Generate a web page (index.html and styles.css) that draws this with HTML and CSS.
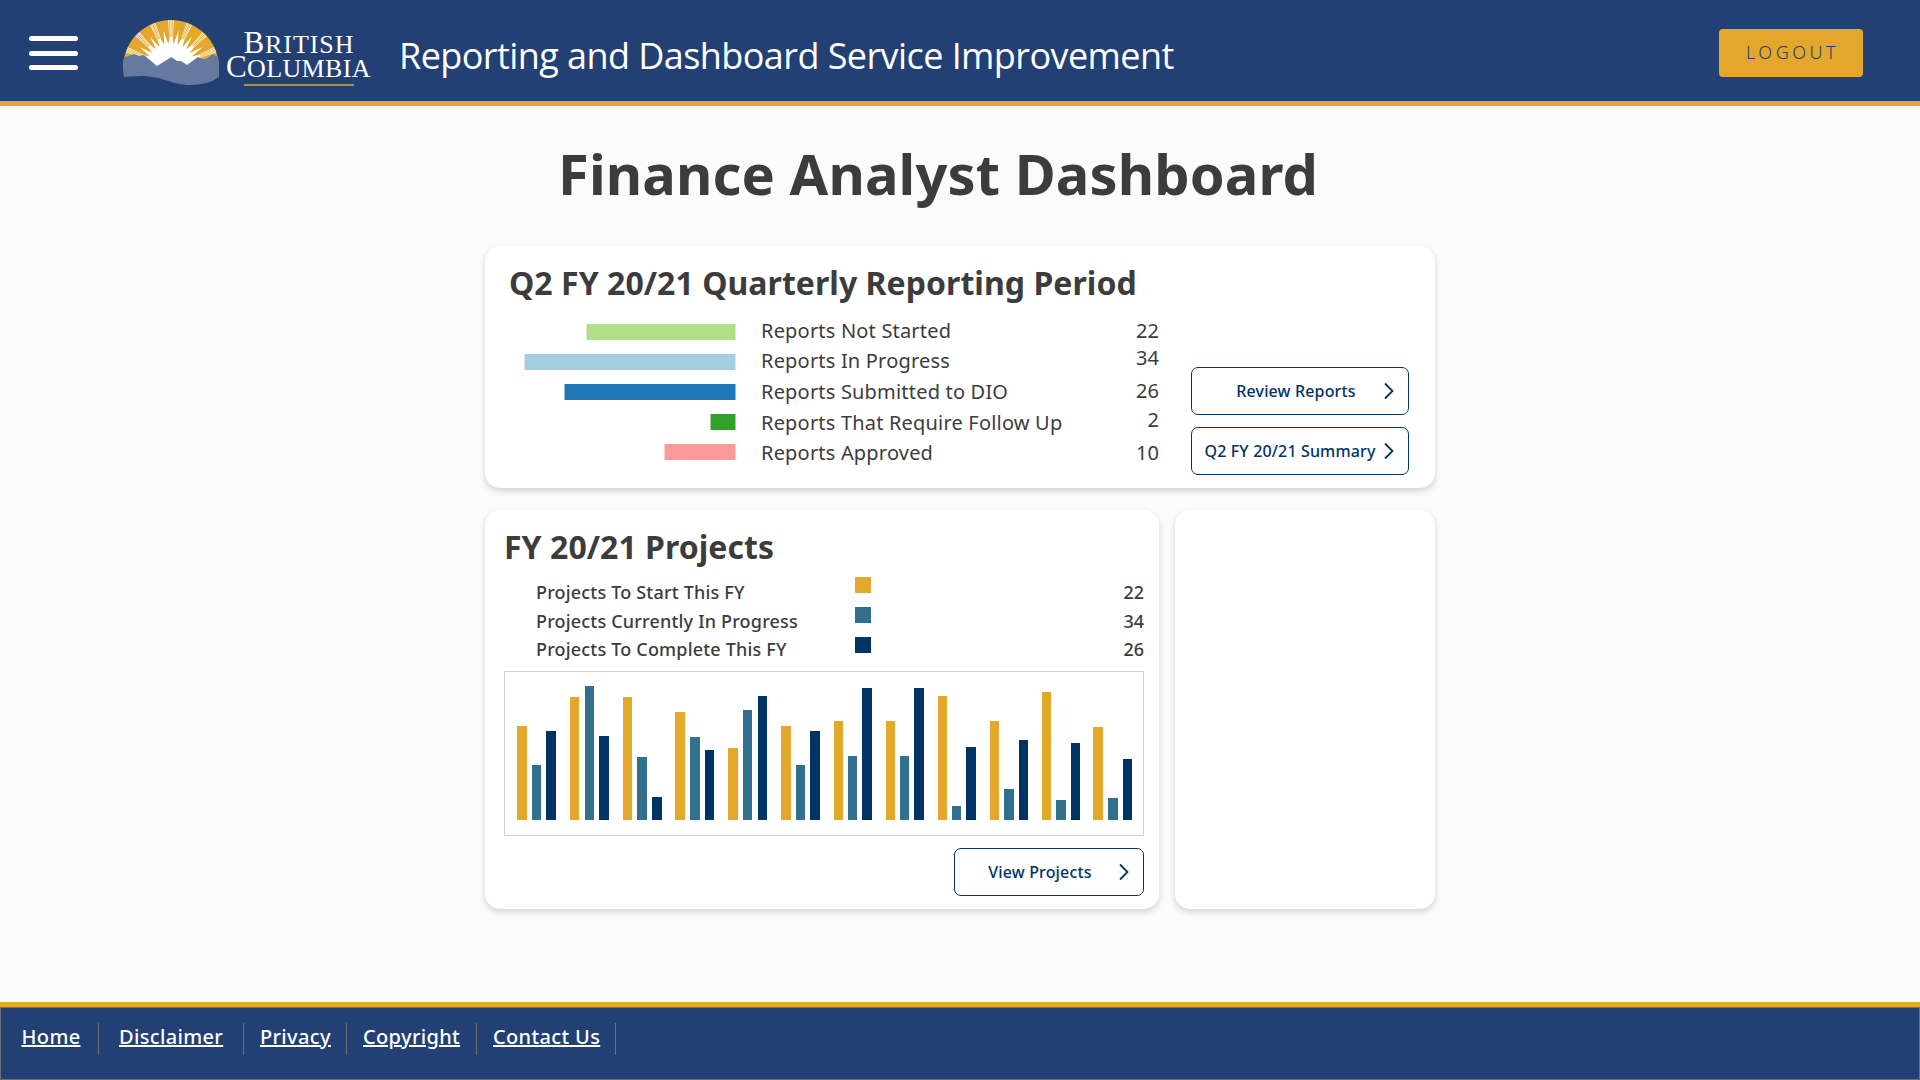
FILE: index.html
```html
<!DOCTYPE html>
<html lang="en">
<head>
<meta charset="utf-8">
<title>Finance Analyst Dashboard</title>
<link rel="stylesheet" href="styles.css">
</head>
<body>
<header class="header">
  <button class="menu" aria-label="Menu"><span></span><span></span><span></span></button>
  <svg class="logo" width="260" height="80" viewBox="115 12 260 80" role="img" aria-label="British Columbia">
    <defs>
      <clipPath id="dome"><path d="M123 68A48 48 0 0 1 219 68Z"/></clipPath>
      <g id="ray">
        <path d="M0 0L-2.900-50H-2.100ZM0 0L-1.250-50H-.5ZM0 0L.5-50H1.250ZM0 0L2.100-50H2.900ZM-2.800-22L-1.500-31H1.500L2.800-22Z"/>
        <path transform="rotate(11.250)" d="M-2.300-22L0-38 2.300-22Z"/>
      </g>
    </defs>
    <g clip-path="url(#dome)">
      <rect x="120" y="16" width="102" height="50" fill="#e3a82b"/>
      <g transform="translate(171 68)" fill="#fff">
        <circle r="24.500"/>
        <use href="#ray" transform="rotate(-90)"/>
        <use href="#ray" transform="rotate(-67.500)"/>
        <use href="#ray" transform="rotate(-45)"/>
        <use href="#ray" transform="rotate(-22.500)"/>
        <use href="#ray"/>
        <use href="#ray" transform="rotate(22.500)"/>
        <use href="#ray" transform="rotate(45)"/>
        <use href="#ray" transform="rotate(67.500)"/>
      </g>
    </g>
    <path d="M124 57.500L134 54 139 56 144 55 157 66 171.500 57 177 61 181 61 187 65 198 57 203 59 206 59 213 54 218 57Q219.500 67 219 77 208 85 190 85C172 85 162 76 141 76Q130 76 124 77.500 122 67 124 57.500Z" fill="#667a9f"/>
    <text class="word" x="243.500" y="53" textLength="110"><tspan class="cap">B</tspan>RITISH</text>
    <text class="word" x="226" y="77" textLength="144.500"><tspan class="cap">C</tspan>OLUMBIA</text>
    <rect x="244" y="84" width="110" height="2" fill="#b38c3b"/>
  </svg>
  <div class="app-name">Reporting and Dashboard Service Improvement</div>
  <button class="logout">LOGOUT</button>
</header>
<main class="main">
  <h1 class="title">Finance Analyst Dashboard</h1>
  <div class="board">
    <section class="card reports">
      <h2>Q2 FY 20/21 Quarterly Reporting Period</h2>
      <div class="reports-body">
        <div class="bars">
          <i class="bar not-started"></i><i class="bar in-progress"></i><i class="bar submitted"></i><i class="bar follow-up"></i><i class="bar approved"></i>
        </div>
        <ul class="labels"><li>Reports Not Started</li><li>Reports In Progress</li><li>Reports Submitted to DIO</li><li>Reports That Require Follow Up</li><li>Reports Approved</li></ul>
        <ul class="counts"><li>22</li><li>34</li><li>26</li><li>2</li><li>10</li></ul>
        <div class="actions">
          <button class="btn review"><span>Review Reports</span><svg width="10" height="18" viewBox="0 0 10 18"><path d="M1 1.500L8.500 9 1 16.500"/></svg></button>
          <button class="btn summary"><span>Q2 FY 20/21 Summary</span><svg width="10" height="18" viewBox="0 0 10 18"><path d="M1 1.500L8.500 9 1 16.500"/></svg></button>
        </div>
      </div>
    </section>
    <section class="card projects">
      <h2>FY 20/21 Projects</h2>
      <div class="legend">
        <ul class="legend-labels"><li>Projects To Start This FY</li><li>Projects Currently In Progress</li><li>Projects To Complete This FY</li></ul>
        <div class="swatches"><i class="gold"></i><i class="teal"></i><i class="navy"></i></div>
        <ul class="legend-counts"><li>22</li><li>34</li><li>26</li></ul>
      </div>
      <svg class="chart" width="638" height="163" viewBox="505 672 638 163" shape-rendering="crispEdges">
        <path class="gold" d="M517 820V726h10V820ZM570 820V697h9V820ZM623 820V697h9V820ZM675 820V712h10V820ZM728 820V748h10V820ZM781 820V726h10V820ZM834 820V721h9V820ZM886 820V721h9V820ZM938 820V696h9V820ZM990 820V721h9V820ZM1042 820V692h9V820ZM1093 820V727h10V820Z"/>
        <path class="teal" d="M532 820V765h9V820ZM585 820V686h9V820ZM637 820V757h10V820ZM690 820V737h10V820ZM743 820V710h9V820ZM796 820V765h9V820ZM848 820V756h9V820ZM900 820V756h9V820ZM952 820V806h9V820ZM1004 820V789h10V820ZM1056 820V800h10V820ZM1108 820V798h10V820Z"/>
        <path class="navy" d="M546 820V731h10V820ZM599 820V736h10V820ZM652 820V797h10V820ZM705 820V750h9V820ZM758 820V696h9V820ZM810 820V731h10V820ZM862 820V688h10V820ZM914 820V688h10V820ZM966 820V747h10V820ZM1019 820V740h9V820ZM1071 820V743h9V820ZM1123 820V759h9V820Z"/>
      </svg>
      <button class="btn view"><span>View Projects</span><svg width="10" height="18" viewBox="0 0 10 18"><path d="M1 1.500L8.500 9 1 16.500"/></svg></button>
    </section>
    <section class="card blank"></section>
  </div>
</main>
<footer class="footer">
  <nav><a class="home" href="#">Home</a><a class="disclaimer" href="#">Disclaimer</a><a class="privacy" href="#">Privacy</a><a class="copyright" href="#">Copyright</a><a class="contact" href="#">Contact Us</a></nav>
</footer>
</body>
</html>
```
FILE: styles.css
```css
* { box-sizing: border-box; }
body { margin: 0; height: 1080px; overflow: hidden; display: flex; flex-direction: column; background: #fbfbfb; color: #3c3c3c; font-family: "Noto Sans", sans-serif; }
ul { list-style: none; margin: 0; padding: 0; }
h1, h2 { margin: 0; font-weight: 700; }
button { font-family: inherit; padding: 0; cursor: pointer; }

.header { height: 106px; flex: none; display: flex; align-items: flex-start; background: #234075; border-bottom: 5px solid #e3a82b; }
.menu { width: 49px; margin: 36px 0 0 29px; border: 0; background: none; display: flex; flex-direction: column; gap: 9.500px; }
.menu span { height: 5px; border-radius: 3px; background: #fff; }
.logo { margin: 12px 0 0 37px; flex: none; }
.word { font-family: "Liberation Serif", serif; font-size: 26px; fill: #fff; }
.word .cap { font-size: 31px; }
.app-name { margin: 31px 0 0 24px; font-size: 36px; line-height: 50px; letter-spacing: -.57px; color: #fff; white-space: nowrap; font-family: "Open Sans", sans-serif; }
.logout { width: 144px; height: 48px; margin: 29px 57px 0 auto; padding: 0 0 2px 3px; border: 0; border-radius: 4px; background: #e3a82b; color: #234075; font-size: 18px; font-weight: 350; letter-spacing: 3.500px; }

.main { flex: 1; }
.title { margin: 29px 44px 0 0; font-size: 56px; line-height: 76px; letter-spacing: .1px; text-align: center; }
.board { width: 950px; margin: 35px auto 0; display: grid; grid-template-columns: 674px 260px; grid-template-rows: 242px 399px; gap: 22px 16px; }
.card { background: #fff; border-radius: 15px; box-shadow: 0 3px 6px rgba(0, 0, 0, .16); }
.card h2 { font-size: 32px; line-height: 44px; letter-spacing: .04px; white-space: nowrap; }

.reports { grid-column: 1 / 3; padding: 15px 26px 0 24px; }
.reports-body { display: grid; grid-template-columns: 227px 240px 183px 250px; padding-top: 9px; }
.reports-body .labels { padding-left: 25px; white-space: nowrap; letter-spacing: .19px; }
.bars { padding: 10px 0 0; display: flex; flex-direction: column; align-items: flex-end; gap: 14px; }
.bar { height: 16px; border: 0 solid rgba(255, 255, 255, .5); border-width: 0 1px; }
.not-started { width: 150px; background: #b2df8a; }
.in-progress { width: 212px; background: #a6cee3; }
.submitted { width: 172px; background: #1f78b4; }
.follow-up { width: 26px; background: #33a02c; }
.approved { width: 72px; background: #fb9a99; }
.labels, .counts { font-size: 20px; line-height: 30.500px; padding-top: 2px; }
.labels li:nth-child(2) { margin: -.6px 0 .6px; }
.counts { text-align: right; }
.counts li:nth-child(2) { margin: -3.500px 0 3.500px; }
.counts li:nth-child(3) { margin: -1px 0 1px; }
.counts li:nth-child(4) { margin: -3px 0 3px; }
.actions { margin: 53px 0 0 32px; width: 218px; display: flex; flex-direction: column; gap: 12px; }
.btn { width: 218px; height: 48px; display: flex; align-items: center; border: 1px solid #003366; border-radius: 7px; background: #fff; color: #003366; font-size: 16px; font-weight: 550; letter-spacing: .15px; padding: 0 14px 0 12px; white-space: nowrap; }
.btn span { flex: 1; text-align: center; }
.btn.review { padding-left: 16px; }
.btn.summary { padding-left: 4px; }
.btn svg { fill: none; stroke: #003366; stroke-width: 1.800; }

.projects { padding: 15px 15px 0 19px; }
.legend { display: grid; grid-template-columns: 351px 16px 1fr; font-size: 18px; font-weight: 500; line-height: 28.500px; height: 102px; padding-top: 8px; }
.legend-labels { padding: 1px 0 0 32px; letter-spacing: .18px; }
.legend-counts { padding-top: 1px; text-align: right; }
.swatches { display: flex; flex-direction: column; gap: 14px; }
.swatches i { height: 16px; }
i.gold { background: #e3a82b; }
i.teal { background: #31708f; }
i.navy { background: #003366; }
path.gold { fill: #e3a82b; }
path.teal { fill: #31708f; }
path.navy { fill: #003366; }
.chart { display: block; width: 640px; height: 165px; border: 1px solid #d0d0d0; }
.btn.view { width: 190px; margin: 12px 0 0 auto; padding-left: 6px; }

.footer { height: 78px; flex: none; border-top: 5px solid #e3a82b; background: #234075; }
.footer nav { height: 73px; border: 1px solid #707070; padding-top: 15px; display: flex; }
.footer a { height: 32px; line-height: 28px; padding-left: 16px; border-right: 1px solid #707070; color: #fff; font-size: 20px; letter-spacing: .35px; text-decoration: underline; font-weight: 500; white-space: nowrap; }
.footer .home { width: 98px; padding-left: 20.500px; }
.footer .disclaimer { width: 145px; padding-left: 20px; }
.footer .privacy { width: 103px; }
.footer .copyright { width: 130px; }
.footer .contact { width: 139px; }
```
